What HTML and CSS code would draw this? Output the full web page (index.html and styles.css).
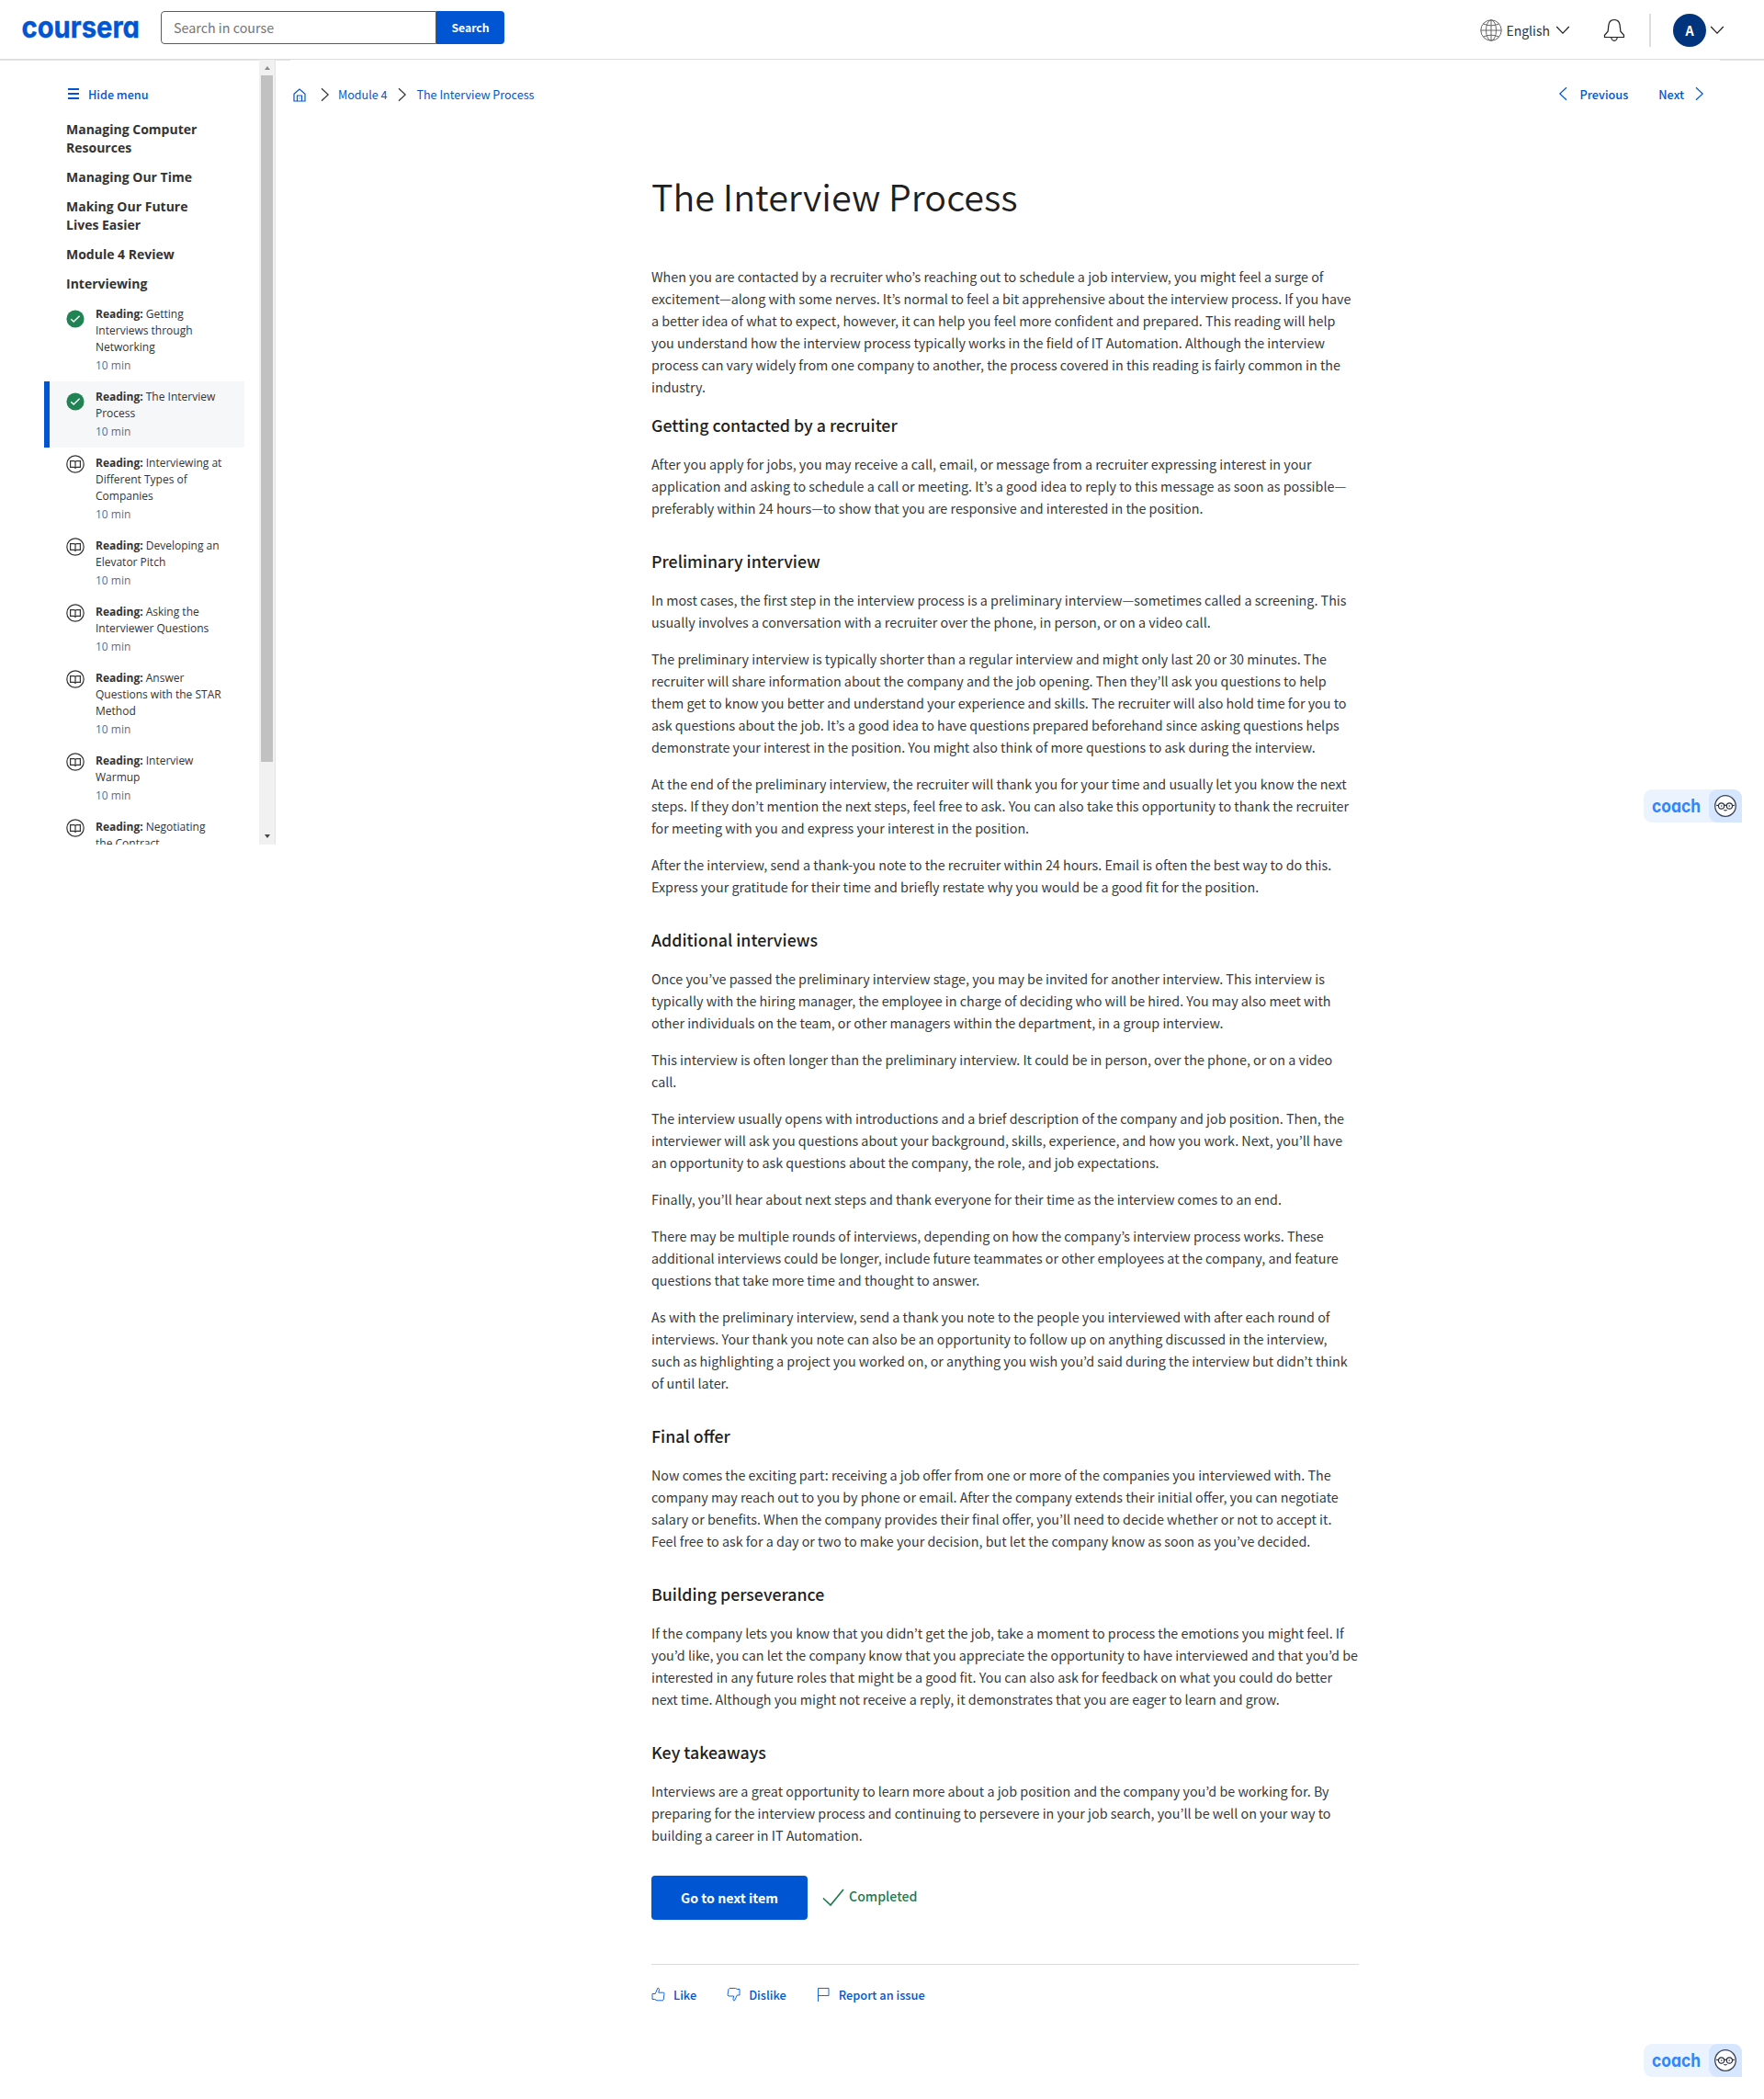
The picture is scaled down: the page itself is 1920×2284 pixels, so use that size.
FILE: index.html
```html
<!DOCTYPE html>
<html lang="en">
<head>
<meta charset="utf-8">
<title>The Interview Process | Coursera</title>
<link rel="stylesheet" href="styles.css">
</head>
<body>
<svg class="sprite" aria-hidden="true">
  <symbol id="chev" viewBox="0 0 16 16"><path d="M4 1.2l7.2 6.8L4 14.8"/></symbol>
  <symbol id="done" viewBox="0 0 20 20"><circle cx="10" cy="10" r="9.6" fill="#1f8354"/><path d="M5.2 10.2l3 2.9 6.4-6.4" fill="none" stroke="#fff" stroke-width="1.4"/></symbol>
  <symbol id="book" viewBox="0 0 20 20"><g fill="none" stroke="#333" stroke-width="1.2"><circle cx="10" cy="10" r="9.2"/><path d="M4.6 6.600h3.900q1.500 0 1.500 1.300 0-1.300 1.500-1.300h3.900v6.700h-3.900q-1.500 0-1.500 1.200 0-1.200-1.500-1.200H4.600zM10 7.4V15"/></g></symbol>
  <symbol id="face" viewBox="0 0 24 24"><circle cx="12" cy="12" r="11.3" fill="#fff" stroke="#3a4255" stroke-width="1.3"/><g fill="none" stroke="#222b3f" stroke-width="1.1"><circle cx="7.6" cy="12" r="3.1"/><circle cx="16.4" cy="12" r="3.1"/><path d="M10.7 11.6q1.3-.9 2.6 0M2 11.2l2.5.4M22 11.2l-2.5.4M10.3 16.4q1.700 1 3.400 0"/></g><circle cx="7.800" cy="12" r=".8" fill="#222b3f"/><circle cx="16.200" cy="12" r=".8" fill="#222b3f"/></symbol>
</svg>

<header class="topbar">
  <svg class="logo" width="130" height="36" role="img" aria-label="coursera"><text x="-.5" y="26.700" textLength="128.500" lengthAdjust="spacingAndGlyphs">coursera</text></svg>
  <form class="search">
    <span class="search-input">Search in course</span>
    <span class="search-btn">Search</span>
  </form>
  <div class="tools">
    <svg class="globe" width="24" height="24" viewBox="0 0 24 24"><circle cx="12" cy="12" r="11.200"/><ellipse cx="12" cy="12" rx="5.500" ry="11.200"/><path d="M12 .8v22.400M.8 12h22.400M3.500 5Q12 8.600 20.500 5M3.500 19Q12 15.400 20.500 19"/></svg>
    <span class="lang">English</span>
    <svg class="down" width="16" height="16"><use href="#chev"/></svg>
    <svg class="bell" width="24" height="26" viewBox="0 0 24 26"><path d="M1.500 20.500h21v-2.200l-3.600-4.100c-.9-5 .4-12.700-6.900-12.700S6 9.200 5.100 14.200l-3.600 4.100zM8.800 20.500a3.200 3.800 0 0 0 6.400 0"/></svg>
    <i class="divider"></i>
    <span class="avatar">A</span>
    <svg class="down last" width="16" height="16"><use href="#chev"/></svg>
  </div>
</header>
<div class="layout">
  <aside class="sidebar">
    <div class="outline">
      <a class="hide"><svg width="12" height="12"><path d="M0 1h12M0 6h12M0 11h12" stroke="#0056d2" stroke-width="2"/></svg>Hide menu</a>
      <h4>Managing Computer<br>Resources</h4>
      <h4>Managing Our Time</h4>
      <h4>Making Our Future<br>Lives Easier</h4>
      <h4>Module 4 Review</h4>
      <h4>Interviewing</h4>
      <ul>
        <li class="is-done"><svg><use href="#done"/></svg><div><b>Reading:</b> Getting<br>Interviews through<br>Networking<small>10 min</small></div></li>
        <li class="is-done current"><svg><use href="#done"/></svg><div><b>Reading:</b> The Interview<br>Process<small>10 min</small></div></li>
        <li><svg><use href="#book"/></svg><div><b>Reading:</b> Interviewing at<br>Different Types of<br>Companies<small>10 min</small></div></li>
        <li><svg><use href="#book"/></svg><div><b>Reading:</b> Developing an<br>Elevator Pitch<small>10 min</small></div></li>
        <li><svg><use href="#book"/></svg><div><b>Reading:</b> Asking the<br>Interviewer Questions<small>10 min</small></div></li>
        <li><svg><use href="#book"/></svg><div><b>Reading:</b> Answer<br>Questions with the STAR<br>Method<small>10 min</small></div></li>
        <li><svg><use href="#book"/></svg><div><b>Reading:</b> Interview<br>Warmup<small>10 min</small></div></li>
        <li><svg><use href="#book"/></svg><div><b>Reading:</b> Negotiating<br>the Contract</div></li>
      </ul>
    </div>
    <div class="scroll"><i class="up"></i><i class="thumb"></i><i class="dn"></i></div>
  </aside>
  <main>
    <nav>
      <svg class="home" width="14" height="15" viewBox="0 0 14 15"><path d="M1 6.200L7 1l6 5.200V14H1zM4.500 14V8h5v6M6.500 11h1"/></svg>
      <svg class="sep" width="16" height="16"><use href="#chev"/></svg>
      <a>Module 4</a>
      <svg class="sep" width="16" height="16"><use href="#chev"/></svg>
      <a>The Interview Process</a>
      <span class="pager"><svg class="flip" width="16" height="16"><use href="#chev"/></svg><b class="prev">Previous</b><b class="next">Next</b><svg width="16" height="16"><use href="#chev"/></svg></span>
    </nav>
    <article>
      <h1>The Interview Process</h1>
      <p>When you are contacted by a recruiter who’s reaching out to schedule a job interview, you might feel a surge of<br>excitement—along with some nerves. It’s normal to feel a bit apprehensive about the interview process. If you have<br>a better idea of what to expect, however, it can help you feel more confident and prepared. This reading will help<br>you understand how the interview process typically works in the field of IT Automation. Although the interview<br>process can vary widely from one company to another, the process covered in this reading is fairly common in the<br>industry.</p>
      <h3 class="first">Getting contacted by a recruiter</h3>
      <p>After you apply for jobs, you may receive a call, email, or message from a recruiter expressing interest in your<br>application and asking to schedule a call or meeting. It’s a good idea to reply to this message as soon as possible—<br>preferably within 24 hours—to show that you are responsive and interested in the position.</p>
      <h3>Preliminary interview</h3>
      <p>In most cases, the first step in the interview process is a preliminary interview—sometimes called a screening. This<br>usually involves a conversation with a recruiter over the phone, in person, or on a video call.</p>
      <p>The preliminary interview is typically shorter than a regular interview and might only last 20 or 30 minutes. The<br>recruiter will share information about the company and the job opening. Then they’ll ask you questions to help<br>them get to know you better and understand your experience and skills. The recruiter will also hold time for you to<br>ask questions about the job. It’s a good idea to have questions prepared beforehand since asking questions helps<br>demonstrate your interest in the position. You might also think of more questions to ask during the interview.</p>
      <p>At the end of the preliminary interview, the recruiter will thank you for your time and usually let you know the next<br>steps. If they don’t mention the next steps, feel free to ask. You can also take this opportunity to thank the recruiter<br>for meeting with you and express your interest in the position.</p>
      <p>After the interview, send a thank-you note to the recruiter within 24 hours. Email is often the best way to do this.<br>Express your gratitude for their time and briefly restate why you would be a good fit for the position.</p>
      <h3>Additional interviews</h3>
      <p>Once you’ve passed the preliminary interview stage, you may be invited for another interview. This interview is<br>typically with the hiring manager, the employee in charge of deciding who will be hired. You may also meet with<br>other individuals on the team, or other managers within the department, in a group interview.</p>
      <p>This interview is often longer than the preliminary interview. It could be in person, over the phone, or on a video<br>call.</p>
      <p>The interview usually opens with introductions and a brief description of the company and job position. Then, the<br>interviewer will ask you questions about your background, skills, experience, and how you work. Next, you’ll have<br>an opportunity to ask questions about the company, the role, and job expectations.</p>
      <p>Finally, you’ll hear about next steps and thank everyone for their time as the interview comes to an end.</p>
      <p>There may be multiple rounds of interviews, depending on how the company’s interview process works. These<br>additional interviews could be longer, include future teammates or other employees at the company, and feature<br>questions that take more time and thought to answer.</p>
      <p>As with the preliminary interview, send a thank you note to the people you interviewed with after each round of<br>interviews. Your thank you note can also be an opportunity to follow up on anything discussed in the interview,<br>such as highlighting a project you worked on, or anything you wish you’d said during the interview but didn’t think<br>of until later.</p>
      <h3>Final offer</h3>
      <p>Now comes the exciting part: receiving a job offer from one or more of the companies you interviewed with. The<br>company may reach out to you by phone or email. After the company extends their initial offer, you can negotiate<br>salary or benefits. When the company provides their final offer, you’ll need to decide whether or not to accept it.<br>Feel free to ask for a day or two to make your decision, but let the company know as soon as you’ve decided.</p>
      <h3>Building perseverance</h3>
      <p>If the company lets you know that you didn’t get the job, take a moment to process the emotions you might feel. If<br>you’d like, you can let the company know that you appreciate the opportunity to have interviewed and that you’d be<br>interested in any future roles that might be a good fit. You can also ask for feedback on what you could do better<br>next time. Although you might not receive a reply, it demonstrates that you are eager to learn and grow.</p>
      <h3>Key takeaways</h3>
      <p>Interviews are a great opportunity to learn more about a job position and the company you’d be working for. By<br>preparing for the interview process and continuing to persevere in your job search, you’ll be well on your way to<br>building a career in IT Automation.</p>
      <div class="actions">
        <span class="go">Go to next item</span>
        <svg width="24" height="20" viewBox="0 0 24 20"><path d="M1 10.500l8 7.500L23 1" fill="none" stroke="#1f7a4d" stroke-width="1.700"/></svg>
        <span class="completed">Completed</span>
      </div>
      <footer>
        <a><svg viewBox="0 0 15 16"><path d="M1 7.500h3.200L7 1.200c1.800 0 1.800 1.600.8 5h5.700l.5 1-.8 6.800-1 .8H6L3.800 13.500H1z"/></svg>Like</a>
        <a><svg viewBox="0 0 15 16"><path d="M14 9h-2.700L8.500 15c-1.800 0-1.800-1.600-.8-5H2L1 9l1-6.500 1-1h6.500l1.800 1H14z"/></svg>Dislike</a>
        <a><svg viewBox="0 0 15 16"><path d="M1.500 16V1.500h11.500v8H1.500"/></svg>Report an issue</a>
      </footer>
    </article>
  </main>
</div>
<div class="coach coach-mid"><svg class="word" width="56" height="20"><text x="0" y="15" textLength="53" lengthAdjust="spacingAndGlyphs">coach</text></svg><span><svg width="24" height="24"><use href="#face"/></svg></span></div>
<div class="coach coach-end"><svg class="word" width="56" height="20"><text x="0" y="15" textLength="53" lengthAdjust="spacingAndGlyphs">coach</text></svg><span><svg width="24" height="24"><use href="#face"/></svg></span></div>
</body>
</html>
```
FILE: styles.css
```css
* { box-sizing: border-box; }
body {
  position: relative;
  margin: 0;
  height: 2284px;
  overflow: hidden;
  background: #fff;
  color: #1f1f1f;
  font-family: "Noto Sans CJK KR", "Noto Sans", sans-serif;
  font-size: 12.55px;
  white-space: nowrap;
}
svg { display: block; flex: none; fill: none; overflow: visible; }
.sprite { position: absolute; width: 0; height: 0; }
a { color: #0056d2; }

/* top bar */
.topbar {
  display: flex;
  align-items: flex-start;
  height: 65px;
  padding: 12px 43px 0 24px;
  border-bottom: 1px solid #dcdcdc;
}
.logo text, .word text { font-family: Inter, sans-serif; font-weight: 700; font-feature-settings: "cv11"; }
.logo { margin: 2px 21px 0 0; fill: #0056d2; stroke: #0056d2; stroke-width: .4; }
.logo text { font-size: 32px; }
.search { display: flex; width: 374px; height: 36px; }
.search-input {
  width: 300px;
  padding-left: 13px;
  border: 1px solid #5c5c5c;
  border-radius: 4px 0 0 4px;
  color: #757575;
  font-size: 14.3px;
  line-height: 33px;
}
.search-btn {
  width: 74px;
  border-radius: 0 4px 4px 0;
  background: #0056d2;
  color: #fff;
  font-size: 12.2px;
  font-weight: 700;
  line-height: 37px;
  text-align: center;
}
.tools { display: flex; align-items: center; height: 42px; margin-left: auto; color: #333; }
.globe { stroke: #666; stroke-width: 1; }
.lang { margin-left: 4px; font-size: 14px; }
.down { stroke: #1f1f1f; stroke-width: 1.2; transform: rotate(90deg); margin-left: 6px; }
.down.last { margin-left: 4px; }
.bell { margin-left: 36px; stroke: #1f1f1f; stroke-width: 1.2; }
.divider { width: 2px; height: 36px; margin: 0 24px 0 26px; background: #ddd; }
.avatar {
  width: 36px; height: 36px;
  border-radius: 50%;
  background: #00347d;
  color: #fff;
  font-size: 14.3px;
  font-weight: 700;
  line-height: 36px;
  text-align: center;
}

.layout {
  display: flex;
  align-items: flex-start;
  background:
    linear-gradient(#e3e3e3, #e3e3e3) 0 0 / 316px 1px no-repeat,
    linear-gradient(#e3e3e3, #e3e3e3) 100% 0 / 48px 1px no-repeat;
}

/* course outline */
.sidebar { display: flex; width: 300px; height: 854px; overflow: hidden; border-right: 1px solid #e3e3e3; }
.outline { width: 282px; height: 854px; overflow: hidden; padding-left: 48px; border-top: 1px solid #e3e3e3; font-family: "Open Sans", sans-serif; }
.hide {
  display: flex;
  align-items: center;
  gap: 10px;
  height: 20px;
  margin: 27px 0 18px 26px;
  font-family: "Noto Sans CJK KR", sans-serif;
  font-size: 12.6px;
  font-weight: 500;
  transform: translateY(-1px);
}
h4 { margin: 0 0 12px 24px; font-size: 14px; font-weight: 700; line-height: 20px; color: #333; }
ul { list-style: none; margin: -6px 0 0; padding: 0; }
li { display: flex; gap: 12px; width: 218px; padding: 8px 0 8px 24px; font-size: 12px; line-height: 18px; color: #333; }
li svg { width: 20px; height: 20px; }
li.is-done svg { margin-top: 4px; }
li small { display: block; margin-top: 2px; font-size: 12px; color: #6b6b6b; }
li.current { padding-left: 18px; border-left: 6px solid #0056d2; background: #f5f7f9; }
.scroll { display: flex; flex-direction: column; align-items: center; width: 17px; padding: 7px 2px 0 2px; background: #f1f1f1; }
.up, .dn { border: 3px solid transparent; }
.up { border-top: 0; border-bottom: 4px solid #8b8b8b; }
.dn { border-bottom: 0; border-top: 4px solid #444; }
.thumb { width: 13px; height: 747px; margin: 6px 0 79px; background: #c1c1c1; }

/* reading */
main { flex: 1; }
nav { display: flex; align-items: center; height: 22px; margin: 27px 62px 0 19px; }
.home { stroke: #0056d2; }
.sep { margin: 0 6px 0 13px; stroke: #333; }
nav svg { stroke-width: 1.2; }
nav a { transform: translateY(-1px); }
nav a + .sep { margin: 0 7px 0 9px; }
.pager { display: flex; align-items: center; margin-left: auto; color: #0056d2; stroke: #0056d2; transform: translateY(-1px); }
.pager b { stroke: none; font-weight: 500; font-size: 12.7px; }
.flip { transform: scaleX(-1); }
.prev { margin: 0 33px 0 11px; }
.next { margin-right: 9px; }
article { width: 770px; margin: 75px 0 0 409px; }
h1 { margin: 0 0 52px; font-size: 39.55px; font-weight: 350; line-height: 48px; }
p { margin: 0 0 16px; font-size: 14.32px; line-height: 24px; color: #373a3c; }
h3 { margin: 33px 0 19px; font-size: 17.78px; font-weight: 500; line-height: 24px; }
h3.first { margin-top: 17px; }
.actions { display: flex; align-items: flex-start; margin-top: 32px; height: 96px; }
.go {
  width: 170px; height: 48px;
  border-radius: 4px;
  background: #0056d2;
  color: #fff;
  font-size: 14.2px;
  font-weight: 700;
  line-height: 48px;
  text-align: center;
}
.actions svg { margin: 14px 5px 0 16px; }
.completed { color: #1f7a4d; font-size: 14.15px; font-weight: 500; line-height: 45px; }
footer { display: flex; gap: 33px; padding-top: 22px; border-top: 1px solid #dadada; font-size: 12.8px; font-weight: 500; line-height: 22px; }
footer a { display: flex; gap: 9px; }
footer svg { width: 15px; height: 16px; margin-top: 2px; stroke: #0056d2; stroke-width: .9; }

/* floating coach button */
.coach { position: absolute; left: 1789px; display: flex; width: 107px; height: 36px; border-radius: 9px 9px 1px 9px; background: #ebf3ff; overflow: hidden; }
.coach-mid { top: 859px; }
.coach-end { top: 2224px; }
.word { margin: 10px 6px 0 9px; fill: #2f86ff; }
.word text { font-size: 20px; }
.coach span { display: grid; place-items: center; width: 36px; height: 36px; border-radius: 9px 0 0 9px; background: #d6e6ff; }
```
